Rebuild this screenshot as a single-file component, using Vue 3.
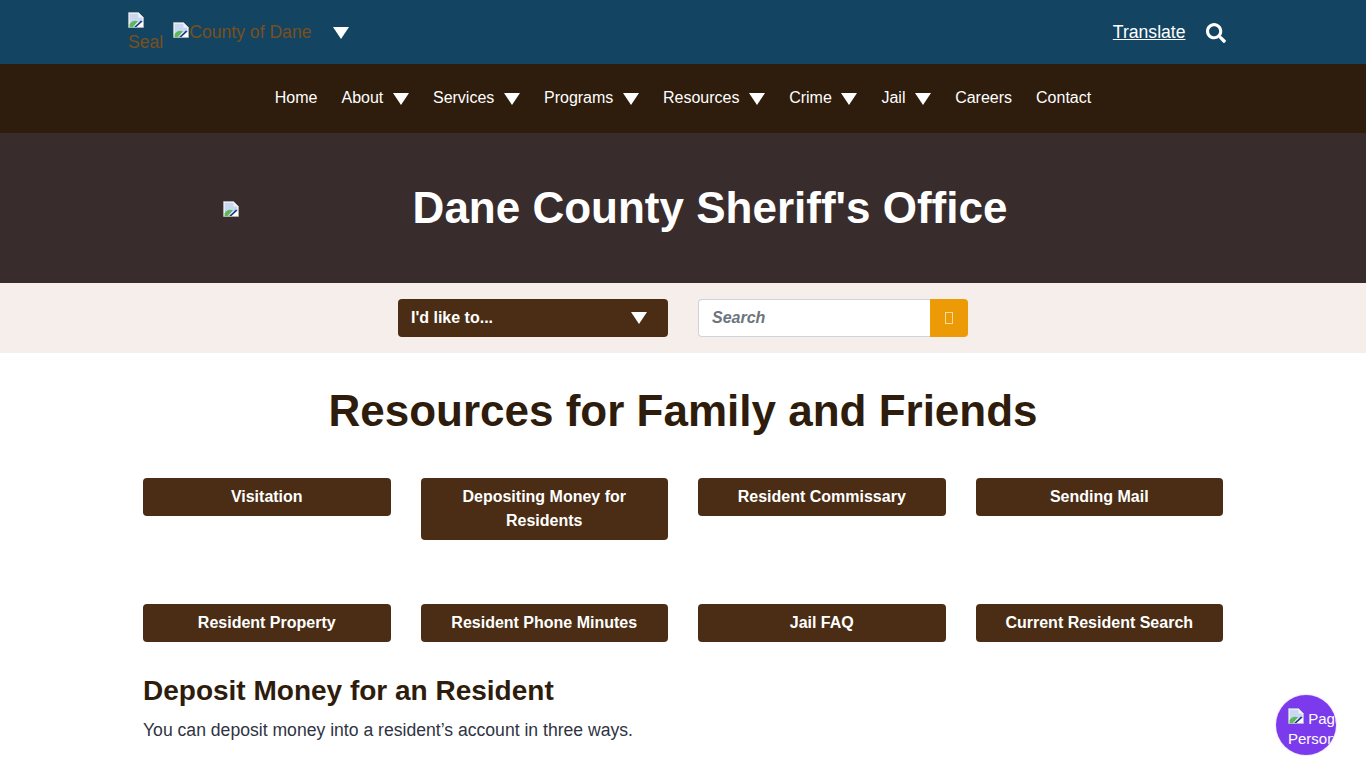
<template>
  <div class="page">
    <header class="top-bar">
      <div class="brand">
        <a class="seal" href="#"><svg class="broken" viewBox="0 0 16 16"><use href="#broken-img" /></svg><br />Seal</a>
        <a class="county" href="#"><svg class="broken" viewBox="0 0 16 16"><use href="#broken-img" /></svg>County of Dane</a>
        <span class="tri brand-tri"></span>
      </div>
      <div class="top-right">
        <a class="translate" href="#">Translate</a>
        <svg class="search-icon" viewBox="0 0 512 512">
          <path fill="#fff" d="M505 442.700L405.300 343c-4.500-4.500-10.600-7-17-7H372c27.600-35.300 44-79.700 44-128C416 93.100 322.900 0 208 0S0 93.100 0 208s93.100 208 208 208c48.300 0 92.700-16.400 128-44v16.300c0 6.400 2.500 12.500 7 17l99.700 99.700c9.400 9.400 24.600 9.400 33.900 0l28.300-28.300c9.400-9.400 9.400-24.600.1-34zM208 336c-70.700 0-128-57.200-128-128 0-70.700 57.200-128 128-128 70.700 0 128 57.200 128 128 0 70.700-57.200 128-128 128z" />
        </svg>
      </div>
    </header>

    <nav class="main-nav">
      <a v-for="item in navItems" :key="item.label" class="nav-item" href="#">
        {{ item.label }}<span v-if="item.menu" class="tri"></span>
      </a>
    </nav>

    <section class="hero">
      <svg class="broken hero-img" viewBox="0 0 16 16"><use href="#broken-img" /></svg>
      <h2 class="hero-title">Dane County Sheriff's Office</h2>
    </section>

    <section class="filter-bar">
      <div class="like-select">
        <span>I'd like to...</span>
        <span class="tri"></span>
      </div>
      <div class="search-box">
        <div class="search-input">Search</div>
        <div class="search-btn"><span class="missing-glyph"></span></div>
      </div>
    </section>

    <main class="content">
      <h1>Resources for Family and Friends</h1>
      <div class="link-grid">
        <div v-for="link in links" :key="link" class="link-cell">
          <a class="link-btn" href="#">{{ link }}</a>
        </div>
      </div>
      <h2 class="sub-head">Deposit Money for an Resident</h2>
      <p class="intro">You can deposit money into a resident’s account in three ways.</p>
    </main>

    <div class="assist">
      <div class="assist-text">
        <svg class="broken" viewBox="0 0 16 16"><use href="#broken-img" /></svg> Page<br />Personal
      </div>
    </div>

    <svg class="defs" width="0" height="0">
      <defs>
        <g id="broken-img">
          <path fill="#fff" d="M0.500 0.500H10.500L15.500 5.500V15.500H0.500Z" />
          <path fill="#c9d7f2" d="M1.500 1.500H10L14.500 6V10L1.500 11Z" />
          <path fill="#5cb85c" d="M1.500 15V12C4 9 7 8 10 9.500L5 15Z" />
          <path fill="#1e3a8a" d="M6 15L13 8.500L14.500 9.500L8.500 15Z" />
          <path fill="#f4f4f4" d="M10.500 0.500V5.500H15.500Z" />
          <path fill="none" stroke="#b9b9b9" stroke-width="0.600" d="M0.500 0.500H10.500L15.500 5.500V15.500H0.500Z" />
        </g>
      </defs>
    </svg>
  </div>
</template>

<script setup>
const navItems = [
  { label: 'Home' },
  { label: 'About', menu: true },
  { label: 'Services', menu: true },
  { label: 'Programs', menu: true },
  { label: 'Resources', menu: true },
  { label: 'Crime', menu: true },
  { label: 'Jail', menu: true },
  { label: 'Careers' },
  { label: 'Contact' },
]

const links = [
  'Visitation',
  'Depositing Money for Residents',
  'Resident Commissary',
  'Sending Mail',
  'Resident Property',
  'Resident Phone Minutes',
  'Jail FAQ',
  'Current Resident Search',
]
</script>

<style>
html, body {
  margin: 0;
  background: #fff;
  overflow: hidden;
}
</style>

<style scoped>
.page {
  font-family: "Liberation Sans", Arial, sans-serif;
  color: #2e1c0c;
  height: 768px;
  overflow: hidden;
  position: relative;
}

.broken {
  width: 16px;
  height: 16px;
  display: inline-block;
  vertical-align: baseline;
}

.defs {
  position: absolute;
}

.tri {
  display: inline-block;
  width: 0;
  height: 0;
  border-left: 8px solid transparent;
  border-right: 8px solid transparent;
  border-top: 12px solid #fff;
}

.top-bar {
  height: 64px;
  background: #134563;
  display: flex;
  justify-content: space-between;
  align-items: flex-start;
  padding: 0 128px;
  box-sizing: border-box;
}

.brand {
  display: flex;
  align-items: flex-start;
}

.seal {
  display: block;
  margin-top: 12px;
  color: #7a4f1c;
  font-size: 17.6px;
  line-height: 20px;
  text-decoration: none;
}

.county {
  display: block;
  margin: 19px 0 0 10px;
  color: #7a4f1c;
  font-size: 17.6px;
  line-height: 26px;
  text-decoration: none;
}

.brand-tri {
  margin: 27px 0 0 22px;
}

.top-right {
  display: flex;
  align-items: center;
  height: 64px;
  margin-right: 12px;
}

.translate {
  color: #fff;
  font-size: 17.6px;
  text-decoration: underline;
}

.search-icon {
  width: 20px;
  height: 20px;
  margin-left: 20.500px;
  margin-top: 1px;
}

.main-nav {
  height: 69px;
  box-sizing: border-box;
  padding-bottom: 2px;
  background: #2e1c0c;
  display: flex;
  justify-content: center;
  align-items: center;
  gap: 24px;
}

.nav-item {
  color: #fff;
  font-size: 16px;
  text-decoration: none;
  display: flex;
  align-items: center;
}

.nav-item .tri {
  margin-left: 9.670px;
  margin-top: 2px;
}

.hero {
  height: 150px;
  background: #382c2c;
  position: relative;
  display: flex;
  align-items: center;
  justify-content: center;
}

.hero-img {
  position: absolute;
  left: 223px;
  top: 68px;
}

.hero-title {
  margin: 0 0 0 54px;
  color: #fff;
  font-size: 44px;
  font-weight: 700;
  line-height: 50px;
}

.filter-bar {
  height: 70px;
  background: #f6eeeb;
  display: flex;
  justify-content: center;
  align-items: center;
  gap: 30px;
}

.like-select {
  width: 270px;
  height: 38px;
  box-sizing: border-box;
  background: #4a2d14;
  border-radius: 4px;
  color: #fff;
  font-weight: 700;
  font-size: 16px;
  display: flex;
  justify-content: space-between;
  align-items: center;
  padding: 0 21px 0 13px;
}

.search-box {
  width: 270px;
  height: 38px;
  display: flex;
}

.search-input {
  flex: 1;
  box-sizing: border-box;
  background: #fff;
  border: 1px solid #ced4da;
  border-right: 0;
  border-radius: 4px 0 0 4px;
  color: #6c757d;
  font-style: italic;
  font-weight: 700;
  font-size: 16px;
  line-height: 36px;
  padding-left: 13px;
}

.search-btn {
  width: 38px;
  background: #ec9a05;
  border-radius: 0 4px 4px 0;
  display: flex;
  align-items: center;
  justify-content: center;
}

.missing-glyph {
  width: 6px;
  height: 10px;
  border: 1px solid #f9dca0;
}

.content {
  padding: 0 143px;
}

h1 {
  margin: 32px 0 41px;
  font-size: 44px;
  line-height: 52px;
  font-weight: 700;
  text-align: center;
}

.link-grid {
  display: grid;
  grid-template-columns: repeat(4, 1fr);
  column-gap: 30px;
  grid-auto-rows: 126px;
}

.link-btn {
  display: block;
  background: #4a2d14;
  color: #fff;
  font-weight: 700;
  font-size: 16px;
  line-height: 24px;
  padding: 7px 20px;
  border-radius: 4px;
  text-align: center;
  text-decoration: none;
}

.sub-head {
  margin: -56px 0 0;
  font-size: 28px;
  line-height: 34px;
  font-weight: 700;
}

.intro {
  margin: 9px 0 0;
  font-size: 17.6px;
  line-height: 26px;
  color: #2f3342;
}

.assist {
  position: absolute;
  left: 1276px;
  top: 695px;
  width: 60px;
  height: 60px;
  border-radius: 50%;
  background: #7c3aed;
  overflow: hidden;
  box-shadow: 0 0 0 1px #f3e8ff;
}

.assist-text {
  margin: 13px 0 0 12px;
  width: 48px;
  overflow: hidden;
  white-space: nowrap;
  color: #fff;
  font-size: 15px;
  line-height: 20px;
}
</style>
